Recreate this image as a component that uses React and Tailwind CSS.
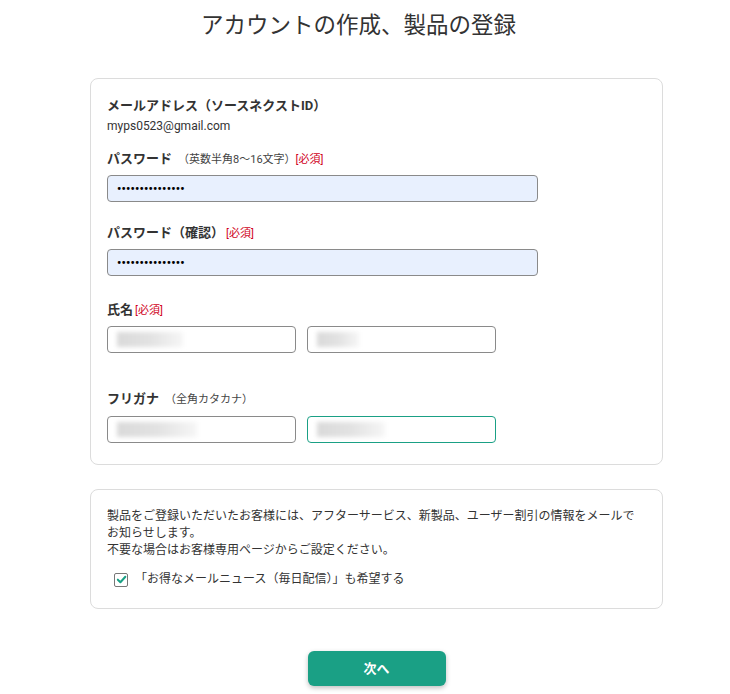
import React from "react";

const font = { fontFamily: 'Roboto, "Noto Sans CJK JP", sans-serif' };

function Req() {
  return <span className="text-[11px] font-normal text-[#d0021b] ml-[2px]">[必須]</span>;
}

function Blur({ w }) {
  return (
    <div className="h-full flex items-center pl-[9px]">
      <div
        className="h-[15px] blur-[2px] bg-gradient-to-r from-[#dadada] via-[#e2e2e2] to-[#f6f6f6]"
        style={{ width: w }}
      />
    </div>
  );
}

export default function App() {
  return (
    <div className="w-[730px] h-[694px] bg-white text-[#333]" style={font}>
      <div className="ml-[90px] w-[573px] pr-[36px] pt-[8px] text-center text-[22.5px] leading-[34px] text-[#333]">
        アカウントの作成、製品の登録
      </div>

      <div className="ml-[90px] mt-[36px] w-[573px] h-[387px] border border-[#dcdcdc] rounded-[8px] px-[16px] pt-[17px]">
        <div className="text-[13px] font-bold leading-[20px]">メールアドレス（ソースネクストID）</div>
        <div className="text-[12px] leading-[18px] mt-[1px]">myps0523@gmail.com</div>

        <div className="mt-[14px] text-[13px] font-bold leading-[20px] flex items-baseline">
          パスワード
          <span className="text-[11px] font-normal ml-[6px] text-[#444]">（英数半角8〜16文字）</span>
          <span className="text-[11px] font-normal text-[#d0021b]">[必須]</span>
        </div>
        <div className="mt-[5px] w-[431px] h-[27px] rounded-[4px] border border-[#8a8a8a] bg-[#e8f0fe] flex items-center pl-[9px] text-[12px] font-bold tracking-[0.2px] text-black">
          •••••••••••••••
        </div>

        <div className="mt-[21px] text-[13px] font-bold leading-[20px] flex items-baseline">
          パスワード（確認）<Req />
        </div>
        <div className="mt-[5px] w-[431px] h-[27px] rounded-[4px] border border-[#8a8a8a] bg-[#e8f0fe] flex items-center pl-[9px] text-[12px] font-bold tracking-[0.2px] text-black">
          •••••••••••••••
        </div>

        <div className="mt-[24px] text-[13px] font-bold leading-[20px] flex items-baseline">
          氏名<Req />
        </div>
        <div className="mt-[5px] flex gap-[11px]">
          <div className="w-[189px] h-[27px] rounded-[4px] border border-[#8a8a8a] bg-white">
            <Blur w={66} />
          </div>
          <div className="w-[189px] h-[27px] rounded-[4px] border border-[#8a8a8a] bg-white">
            <Blur w={42} />
          </div>
        </div>

        <div className="mt-[36px] text-[13px] font-bold leading-[20px] flex items-baseline">
          フリガナ
          <span className="text-[11px] font-normal ml-[6px] text-[#444]">（全角カタカナ）</span>
        </div>
        <div className="mt-[6px] flex gap-[11px]">
          <div className="w-[189px] h-[27px] rounded-[4px] border border-[#8a8a8a] bg-white">
            <Blur w={80} />
          </div>
          <div className="w-[189px] h-[27px] rounded-[4px] border border-[#1aa085] bg-white">
            <Blur w={68} />
          </div>
        </div>
      </div>

      <div className="ml-[90px] mt-[24px] w-[573px] h-[120px] border border-[#dcdcdc] rounded-[8px] px-[16px] pt-[18px]">
        <div className="text-[12px] leading-[17px] text-[#333]">
          製品をご登録いただいたお客様には、アフターサービス、新製品、ユーザー割引の情報をメールで
          <br />
          お知らせします。
          <br />
          不要な場合はお客様専用ページからご設定ください。
        </div>
        <div className="mt-[12px] ml-[7px] flex items-center gap-[7px]">
          <div className="w-[14px] h-[14px] rounded-[2px] border border-[#777] flex items-center justify-center bg-white">
            <svg width="11" height="11" viewBox="0 0 12 12">
              <path d="M2 6.2 L4.8 9 L10.2 3" fill="none" stroke="#1aa085" strokeWidth="2.2" strokeLinecap="round" strokeLinejoin="round" />
            </svg>
          </div>
          <span className="text-[12px] leading-[17px]">「お得なメールニュース（毎日配信）」も希望する</span>
        </div>
      </div>

      <div className="ml-[90px] w-[573px] mt-[42px] flex justify-center">
        <button className="w-[138px] h-[35px] rounded-[6px] bg-[#1aa085] text-white text-[13px] font-bold shadow-[0_2px_5px_rgba(0,0,0,0.25)]">
          次へ
        </button>
      </div>
    </div>
  );
}
